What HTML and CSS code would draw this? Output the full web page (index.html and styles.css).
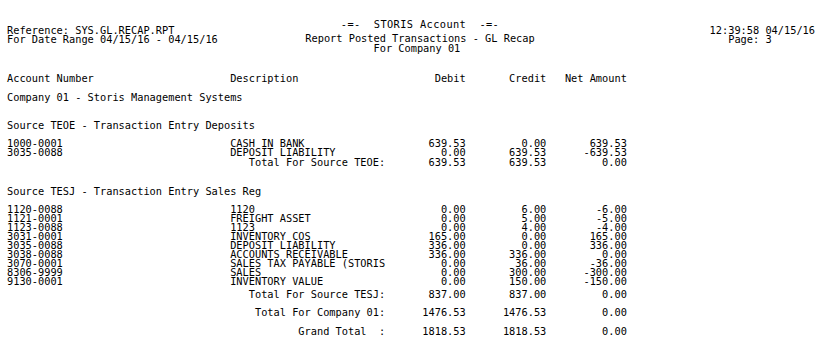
FILE: index.html
```html
<!DOCTYPE html>
<html lang="en">
<head>
<meta charset="utf-8">
<title>STORIS Account - GL Recap</title>
<link rel="stylesheet" href="styles.css">
</head>
<body>
<div class="report">
  <header class="head">
    <div class="head-left">
      <div class="hl">Reference: SYS.GL.RECAP.RPT</div>
      <div class="hl">For Date Range 04/15/16 - 04/15/16</div>
    </div>
    <div class="head-center">
      <div class="hl title">-=-  STORIS Account  -=-</div>
      <div class="hl sub">Report Posted Transactions - GL Recap</div>
      <div class="hl">For Company 01 </div>
    </div>
    <div class="head-right">
      <div class="hl">12:39:58 04/15/16</div>
      <div class="hl">   Page: 3</div>
    </div>
  </header>

  <div class="row colhead">
    <span>Account Number</span><span>Description</span><span class="num">Debit</span><span class="num">Credit</span><span class="num">Net Amount</span>
  </div>

  <div class="line company">Company 01 - Storis Management Systems</div>

  <div class="line source">Source TEOE - Transaction Entry Deposits</div>
  <div class="block">
    <div class="row"><span>1000-0001</span><span>CASH IN BANK</span><span class="num">639.53</span><span class="num">0.00</span><span class="num">639.53</span></div>
    <div class="row"><span>3035-0088</span><span>DEPOSIT LIABILITY</span><span class="num">0.00</span><span class="num">639.53</span><span class="num">-639.53</span></div>
  </div>
  <div class="row total total-src1"><span class="tlabel">Total For Source TEOE:</span><span class="num">639.53</span><span class="num">639.53</span><span class="num">0.00</span></div>

  <div class="line source source2">Source TESJ - Transaction Entry Sales Reg</div>
  <div class="block">
    <div class="row"><span>1120-0088</span><span>1120</span><span class="num">0.00</span><span class="num">6.00</span><span class="num">-6.00</span></div>
    <div class="row"><span>1121-0001</span><span>FREIGHT ASSET</span><span class="num">0.00</span><span class="num">5.00</span><span class="num">-5.00</span></div>
    <div class="row"><span>1123-0088</span><span>1123</span><span class="num">0.00</span><span class="num">4.00</span><span class="num">-4.00</span></div>
    <div class="row"><span>3031-0001</span><span>INVENTORY COS</span><span class="num">165.00</span><span class="num">0.00</span><span class="num">165.00</span></div>
    <div class="row"><span>3035-0088</span><span>DEPOSIT LIABILITY</span><span class="num">336.00</span><span class="num">0.00</span><span class="num">336.00</span></div>
    <div class="row"><span>3038-0088</span><span>ACCOUNTS RECEIVABLE</span><span class="num">336.00</span><span class="num">336.00</span><span class="num">0.00</span></div>
    <div class="row"><span>3070-0001</span><span>SALES TAX PAYABLE (STORIS</span><span class="num">0.00</span><span class="num">36.00</span><span class="num">-36.00</span></div>
    <div class="row"><span>8306-9999</span><span>SALES</span><span class="num">0.00</span><span class="num">300.00</span><span class="num">-300.00</span></div>
    <div class="row"><span>9130-0001</span><span>INVENTORY VALUE</span><span class="num">0.00</span><span class="num">150.00</span><span class="num">-150.00</span></div>
  </div>
  <div class="row total total-src2"><span class="tlabel">Total For Source TESJ:</span><span class="num">837.00</span><span class="num">837.00</span><span class="num">0.00</span></div>

  <div class="row total total-co"><span class="tlabel">Total For Company 01:</span><span class="num">1476.53</span><span class="num">1476.53</span><span class="num">0.00</span></div>

  <div class="row total total-grand"><span class="tlabel">Grand Total  :</span><span class="num">1818.53</span><span class="num">1818.53</span><span class="num">0.00</span></div>
</div>
</body>
</html>
```
FILE: styles.css
```css
html, body {
  margin: 0;
  padding: 0;
  background: #ffffff;
}

.report {
  padding: 20px 11px 0 7px;
  font-family: "DejaVu Sans Mono", "Liberation Mono", monospace;
  font-size: 10.3px;
  color: #000000;
}

.hl,
.line,
.row > span {
  white-space: pre;
}

/* ---------- page header ---------- */
.head {
  display: grid;
  grid-template-columns: 293px 240px 1fr;
  line-height: 9.5px;
}

.head-left {
  padding-top: 5.5px;
}

.head-center {
  text-align: center;
}

.title {
  letter-spacing: 0.4px;
}

.sub {
  margin-top: 4.5px;
}

.head-right {
  justify-self: end;
  padding-top: 5.5px;
}

/* ---------- report body ---------- */
.row {
  display: grid;
  grid-template-columns: 36ch 25ch 13ch 13ch 13ch;
  line-height: 9px;
}

.line {
  line-height: 9px;
}

.num {
  text-align: right;
}

.tlabel {
  grid-column: 1 / 3;
  text-align: right;
}

.colhead {
  margin-top: 20.8px;
}

.company {
  margin-top: 10px;
}

.source {
  margin-top: 19px;
}

.source2 {
  margin-top: 19.7px;
}

.block {
  margin-top: 9.5px;
}

.total-src1 {
  margin-top: 0.8px;
}

.total-src2 {
  margin-top: 3.7px;
}

.total-co {
  margin-top: 8.7px;
}

.total-grand {
  margin-top: 10px;
}
```
